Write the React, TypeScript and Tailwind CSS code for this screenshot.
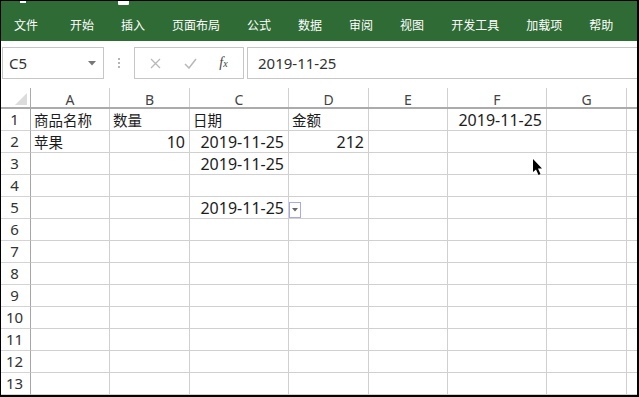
import React from 'react';

const tabs = ['文件', '开始', '插入', '页面布局', '公式', '数据', '审阅', '视图', '开发工具', '加载项', '帮助'];

const colWidths = ['w-[79px]', 'w-[80px]', 'w-[99px]', 'w-[80px]', 'w-[79px]', 'w-[99px]', 'w-[80px]', 'w-[10px]'];
const colNames = ['A', 'B', 'C', 'D', 'E', 'F', 'G', ''];

type Cell = { text: string; align: 'left' | 'right'; cjk?: boolean };

// row -> column index -> cell
const data: Record<number, Record<number, Cell>> = {
  1: {
    0: { text: '商品名称', align: 'left', cjk: true },
    1: { text: '数量', align: 'left', cjk: true },
    2: { text: '日期', align: 'left', cjk: true },
    3: { text: '金额', align: 'left', cjk: true },
    5: { text: '2019-11-25', align: 'right' },
  },
  2: {
    0: { text: '苹果', align: 'left', cjk: true },
    1: { text: '10', align: 'right' },
    2: { text: '2019-11-25', align: 'right' },
    3: { text: '212', align: 'right' },
  },
  3: { 2: { text: '2019-11-25', align: 'right' } },
  5: { 2: { text: '2019-11-25', align: 'right' } },
};

const rows = Array.from({ length: 13 }, (_, i) => i + 1);

const App: React.FC = () => {
  return (
    <div className="w-[639px] h-[397px] overflow-hidden bg-white border-t border-l border-r-2 border-b-2 border-black font-['Noto_Sans','Noto_Sans_CJK_SC',sans-serif] flex flex-col">
      {/* Ribbon tabs */}
      <div className="relative h-[40px] shrink-0 bg-[#2f6b35] flex items-center pl-[13px] pt-[8px] gap-[27px] text-white text-[12px] font-['Noto_Sans_CJK_SC',sans-serif]">
        <span className="absolute left-[19px] top-0 w-[6px] h-[2px] bg-white" />
        <span className="absolute left-[117px] top-0 w-[11px] h-[4px] bg-white rounded-b-[1px]" />
        {tabs.map((t, i) => (
          <span key={t} className={i === 0 ? 'mr-[5px] leading-none' : 'leading-none'}>
            {t}
          </span>
        ))}
      </div>

      {/* Formula bar */}
      <div className="h-[47px] shrink-0 flex items-start pt-[6px]">
        <div className="ml-[1px] w-[102px] h-[32px] border border-[#c6c6c6] flex items-center justify-between pl-[6px] pr-[7px] text-[15px] text-[#333]">
          <span>C5</span>
          <svg width="8" height="5" viewBox="0 0 8 5">
            <polygon points="0,0 8,0 4,4.5" fill="#777" />
          </svg>
        </div>
        <div className="w-[30px] h-[32px] flex flex-col items-center justify-center gap-[2px]">
          <span className="w-[2px] h-[2px] bg-[#b5b5b5]" />
          <span className="w-[2px] h-[2px] bg-[#b5b5b5]" />
          <span className="w-[2px] h-[2px] bg-[#b5b5b5]" />
        </div>
        <div className="w-[110px] h-[32px] border border-[#c6c6c6] flex items-center justify-around px-[4px]">
          <svg width="11" height="11" viewBox="0 0 11 11">
            <path d="M1 1 L10 10 M10 1 L1 10" stroke="#b8b8b8" strokeWidth="1.3" />
          </svg>
          <svg width="13" height="11" viewBox="0 0 13 11">
            <path d="M1 6 L5 10 L12 1" stroke="#b8b8b8" strokeWidth="1.5" fill="none" />
          </svg>
          <span className="font-['Liberation_Serif',serif] italic text-[14px] text-[#444] leading-none">
            f<span className="text-[10px]">x</span>
          </span>
        </div>
        <div className="ml-[3px] flex-1 h-[32px] border-y border-l border-[#c6c6c6] flex items-center pl-[10px] text-[15px] text-[#333]">
          2019-11-25
        </div>
      </div>

      {/* Grid */}
      <div className="relative flex-1 flex flex-col">
        {/* Column headers */}
        <div className="flex h-[21px] shrink-0 border-b-2 border-[#ababab]">
          <div className="w-[30px] shrink-0 border-r border-[#ababab] relative">
            <svg className="absolute left-0 top-0" width="29" height="19" viewBox="0 0 29 19">
              <polygon points="26,5 26,17 14,17" fill="#dcdcdc" />
            </svg>
          </div>
          {colNames.map((c, i) => (
            <div
              key={i}
              className={`${colWidths[i]} shrink-0 ${i < 7 ? 'border-r border-[#d0d0d0]' : ''} flex items-center justify-center pt-[3px] text-[14px] text-[#444]`}
            >
              {c}
            </div>
          ))}
        </div>

        {rows.map((r) => (
          <div key={r} className="flex h-[22px] shrink-0">
            <div className="w-[30px] shrink-0 border-r border-[#a6a6a6] border-b border-b-[#d4d4d4] flex items-center justify-center pr-[2px] text-[15px] text-[#333]">
              {r}
            </div>
            {colWidths.map((w, i) => {
              const cell = data[r]?.[i];
              return (
                <div
                  key={i}
                  className={`${w} shrink-0 relative border-b border-[#d0d0d0] ${i < 7 ? 'border-r' : ''} flex items-center overflow-visible whitespace-nowrap ${
                    cell?.align === 'right' ? 'justify-end pr-[4px]' : 'justify-start pl-[3px]'
                  } ${cell?.cjk ? "text-[14.5px] font-['Noto_Sans_CJK_SC',sans-serif]" : 'text-[16px]'} text-[#1c1c1c]`}
                >
                  {cell?.text}
                  {r === 5 && i === 3 && (
                    <span className="absolute left-0 top-[5px] w-[12px] h-[16px] bg-white border border-[#a9a9e6] flex items-center justify-center">
                      <svg width="6" height="4" viewBox="0 0 6 4">
                        <polygon points="0,0 6,0 3,3.5" fill="#666" />
                      </svg>
                    </span>
                  )}
                </div>
              );
            })}
          </div>
        ))}

        {/* Mouse pointer */}
        <svg className="absolute left-[532px] top-[71px]" width="12" height="17" viewBox="0 0 12 17">
          <path d="M0 0 L0 13 L3 10.5 L5.5 16 L7.5 15 L5 9.5 L9 9.5 Z" fill="#000" />
        </svg>
      </div>
    </div>
  );
};

export default App;
